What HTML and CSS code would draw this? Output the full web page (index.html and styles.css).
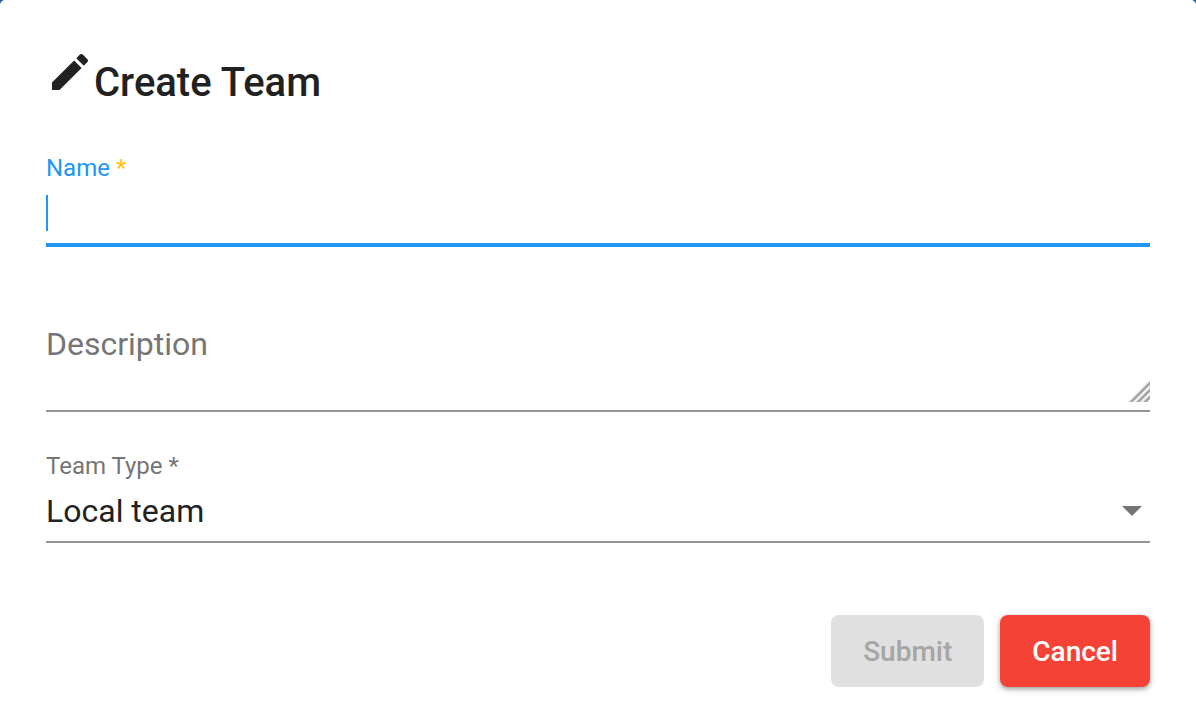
FILE: index.html
```
<!DOCTYPE html>
<html lang="en">
<head>
<meta charset="utf-8">
<meta name="viewport" content="width=device-width, initial-scale=1">
<title>Create Team</title>
<link rel="stylesheet" href="styles.css">
</head>
<body>
<main class="dialog" role="dialog" aria-labelledby="dialog-title">
  <header class="dialog-header">
    <svg class="title-icon" viewBox="0 0 24 24" aria-hidden="true"><path d="M3 17.25V21h3.75L17.81 9.94l-3.75-3.75L3 17.25zM20.71 7.04c.39-.39.39-1.02 0-1.41l-2.34-2.34c-.39-.39-1.02-.39-1.41 0l-1.83 1.83 3.75 3.75 1.83-1.83z"/></svg>
    <h1 class="title" id="dialog-title">Create Team</h1>
  </header>
  <form class="form">
    <div class="field field-active">
      <label class="label" for="name">Name <span class="required">*</span></label>
      <input class="input" id="name" type="text" required>
    </div>
    <div class="field field-area">
      <label class="label-inside" for="description">Description</label>
      <textarea class="textarea" id="description"></textarea>
      <svg class="grip" viewBox="0 0 22 22" aria-hidden="true"><path class="grip-soft" d="M2 23 23 2M9 23 23 9M16 23 23 16"/><path d="M2 23 23 2M9 23 23 9M16 23 23 16"/></svg>
    </div>
    <div class="field">
      <label class="label" for="type">Team Type *</label>
      <select class="select" id="type" required><option>Local team</option></select>
      <svg class="arrow" viewBox="0 0 20 10" aria-hidden="true"><path d="M0 0h20L10 10z"/></svg>
    </div>
    <div class="actions">
      <button class="button submit" type="submit" disabled>Submit</button>
      <button class="button cancel" type="button">Cancel</button>
    </div>
  </form>
</main>
</body>
</html>
```
FILE: styles.css
```
* {
  box-sizing: border-box;
}

body {
  margin: 0;
  background: #1a5ba0;
  font-family: Roboto, "Liberation Sans", sans-serif;
  color: #212121;
}

.dialog {
  min-height: 100vh;
  padding: 48px 46px 27px;
  border-radius: 5px 5px 0 0;
  background: #fff;
}

.dialog-header {
  display: flex;
  align-items: flex-start;
}

.title-icon {
  width: 48px;
  height: 48px;
  fill: #212121;
}

.title {
  margin: 0;
  font-size: 40px;
  font-weight: 500;
  line-height: 70px;
}

.form {
  display: flex;
  flex-direction: column;
  padding-top: 36px;
}

.field {
  position: relative;
  display: flex;
  flex-direction: column;
}

.label {
  color: #757575;
  font-size: 24px;
  line-height: 28px;
}

.field-active .label {
  color: #2196f3;
}

.label .required {
  color: #ffc107;
}

.input,
.textarea,
.select {
  width: 100%;
  margin: 0;
  padding: 0;
  border: 0;
  border-bottom: 2px solid #949494;
  border-radius: 0;
  outline: 0;
  background: transparent;
  color: #212121;
  font: 400 32px/36px Roboto, "Liberation Sans", sans-serif;
}

.input {
  height: 65px;
  border-bottom: 4px solid #2196f3;
  background: linear-gradient(#2196f3, #2196f3) 0 13px / 2px 36px no-repeat;
  caret-color: transparent;
}

.field-area {
  padding-top: 78px;
}

.textarea {
  height: 87px;
  resize: none;
}

.label-inside {
  position: absolute;
  left: 0;
  bottom: 50px;
  color: #757575;
  font-size: 32px;
  line-height: 36px;
}

.grip {
  position: absolute;
  right: 0;
  bottom: 10px;
  width: 22px;
  height: 22px;
  fill: none;
  stroke: #a0a0a0;
  stroke-width: 2;
}

.grip-soft {
  stroke: #dcdcdc;
  stroke-width: 4;
}

.field-area + .field {
  padding-top: 40px;
}

.select {
  height: 63px;
  appearance: none;
}

.arrow {
  position: absolute;
  right: 8px;
  bottom: 27px;
  width: 20px;
  height: 10px;
  fill: #757575;
  pointer-events: none;
}

.actions {
  display: flex;
  justify-content: flex-end;
  gap: 16px;
  padding-top: 72px;
}

.button {
  height: 72px;
  padding: 2px 32px 0;
  border: 0;
  border-radius: 8px;
  font: 500 28px/36px Roboto, "Liberation Sans", sans-serif;
}

.submit {
  background: #e0e0e0;
  color: #a6a6a6;
}

.cancel {
  background: #f44336;
  color: #fff;
  box-shadow: 0 2px 4px rgba(0, 0, 0, 0.3), 0 2px 10px rgba(0, 0, 0, 0.12);
}
```
